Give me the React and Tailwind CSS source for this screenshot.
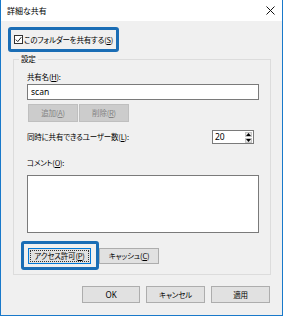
export default function App() {
  const btn = "h-[17px] bg-[#e1e1e1] border border-[#adadad] flex items-center justify-center leading-none";
  return (
    <div className="w-[283px] h-[316px] bg-[#f0f0f0] border-x border-b border-[#1979ca] flex flex-col text-[7.5px] leading-[10px] tracking-[-0.2px] whitespace-nowrap text-black font-['Noto_Sans_CJK_JP',sans-serif] [font-feature-settings:'palt']">
      {/* title bar */}
      <div className="h-[21px] shrink-0 bg-white flex items-center justify-between pl-[6px] pr-[6px]">
        <span className="text-[8px] tracking-normal">詳細な共有</span>
        <svg width="9" height="9" viewBox="0 0 9 9" className="mr-[1px]">
          <path d="M0.5 0.5 L8.5 8.5 M8.5 0.5 L0.5 8.5" stroke="#111" strokeWidth="1" fill="none" />
        </svg>
      </div>

      {/* checkbox highlight */}
      <div className="mt-[6px] ml-[7px] w-[111px] h-[25px] border-[3px] border-[#1a6db5] rounded-[3px] flex items-center pl-[3px] gap-[1px]">
        <div className="w-[9px] h-[9px] shrink-0 border border-[#333] bg-white flex items-center justify-center">
          <svg width="7" height="7" viewBox="0 0 7 7">
            <path d="M0.8 3.6 L2.8 5.6 L6.3 1.2" stroke="#222" strokeWidth="1" fill="none" />
          </svg>
        </div>
        <span>このフォルダーを共有する(<u>S</u>)</span>
      </div>

      {/* group box */}
      <div className="relative mt-[7px] ml-[12px] w-[258px] border border-[#dcdcdc] pl-[13px] pb-[4px] flex flex-col">
        <span className="absolute -top-[6px] left-[5px] px-[2px] bg-[#f0f0f0]">設定</span>

        <div className="mt-[12px]">共有名(<u>H</u>):</div>
        <div className="mt-[2px] w-[232px] h-[16px] bg-white border border-[#7a7a7a] flex items-center pl-[3px]">
          <span className="font-['Noto_Sans',sans-serif] text-[8.5px] tracking-normal">scan</span>
        </div>

        <div className="mt-[4px] flex pl-[1px] gap-[1px]">
          <div className="w-[50px] h-[18px] bg-[#cccccc] border border-[#bfbfbf] text-[#838383] flex items-center justify-center">追加(<u>A</u>)</div>
          <div className="w-[50px] h-[18px] bg-[#cccccc] border border-[#bfbfbf] text-[#838383] flex items-center justify-center">削除(<u>R</u>)</div>
        </div>

        <div className="mt-[8px] w-[232px] h-[14px] flex items-center justify-between pr-[5px]">
          <span>同時に共有できるユーザー数(<u>L</u>):</span>
          <div className="flex h-[14px]">
            <div className="w-[32px] h-[14px] bg-white border border-[#7a7a7a] border-r-0 flex items-center pl-[2px]">
              <span className="font-['Noto_Sans',sans-serif] text-[8.5px] tracking-normal">20</span>
            </div>
            <div className="w-[10px] h-[14px] bg-white border border-[#7a7a7a] border-l-0 flex flex-col p-[1px] gap-[1px]">
              <div className="flex-1 bg-[#e6e6e6] border border-[#c5c5c5] flex items-center justify-center">
                <svg width="5" height="3" viewBox="0 0 5 3"><path d="M0 3 L2.5 0 L5 3 Z" fill="#000" /></svg>
              </div>
              <div className="flex-1 bg-[#e6e6e6] border border-[#c5c5c5] flex items-center justify-center">
                <svg width="5" height="3" viewBox="0 0 5 3"><path d="M0 0 L2.5 3 L5 0 Z" fill="#000" /></svg>
              </div>
            </div>
          </div>
        </div>

        <div className="mt-[14px]">コメント(<u>O</u>):</div>
        <div className="mt-[7px] w-[232px] h-[58px] bg-white border border-[#7a7a7a]"></div>

        <div className="mt-[8px] flex items-start">
          <div className="-ml-[6px] border-[3px] border-[#1a6db5] rounded-[3px] pl-[4px] pr-[5px] pt-[4px] pb-[3px]">
            <div className="w-[63px] h-[16px] bg-[#e1e1e1] border border-[#0078d7] p-[1px]">
              <div className="w-full h-full border border-dotted border-[#333] flex items-center justify-center leading-none">
                アクセス許可(<u>P</u>)
              </div>
            </div>
          </div>
          <div className="mt-[7px] w-[60px] h-[16px] bg-[#e1e1e1] border border-[#adadad] flex items-center justify-center leading-none">
            キャッシュ(<u>C</u>)
          </div>
        </div>
      </div>

      {/* bottom buttons */}
      <div className="mt-[11px] flex justify-end gap-[6px] pr-[12px]">
        <div className={`${btn} w-[58px]`}><span className="font-['Noto_Sans',sans-serif] text-[8px] tracking-normal">OK</span></div>
        <div className={`${btn} w-[59px]`}>キャンセル</div>
        <div className={`${btn} w-[59px]`}>適用</div>
      </div>
    </div>
  );
}
